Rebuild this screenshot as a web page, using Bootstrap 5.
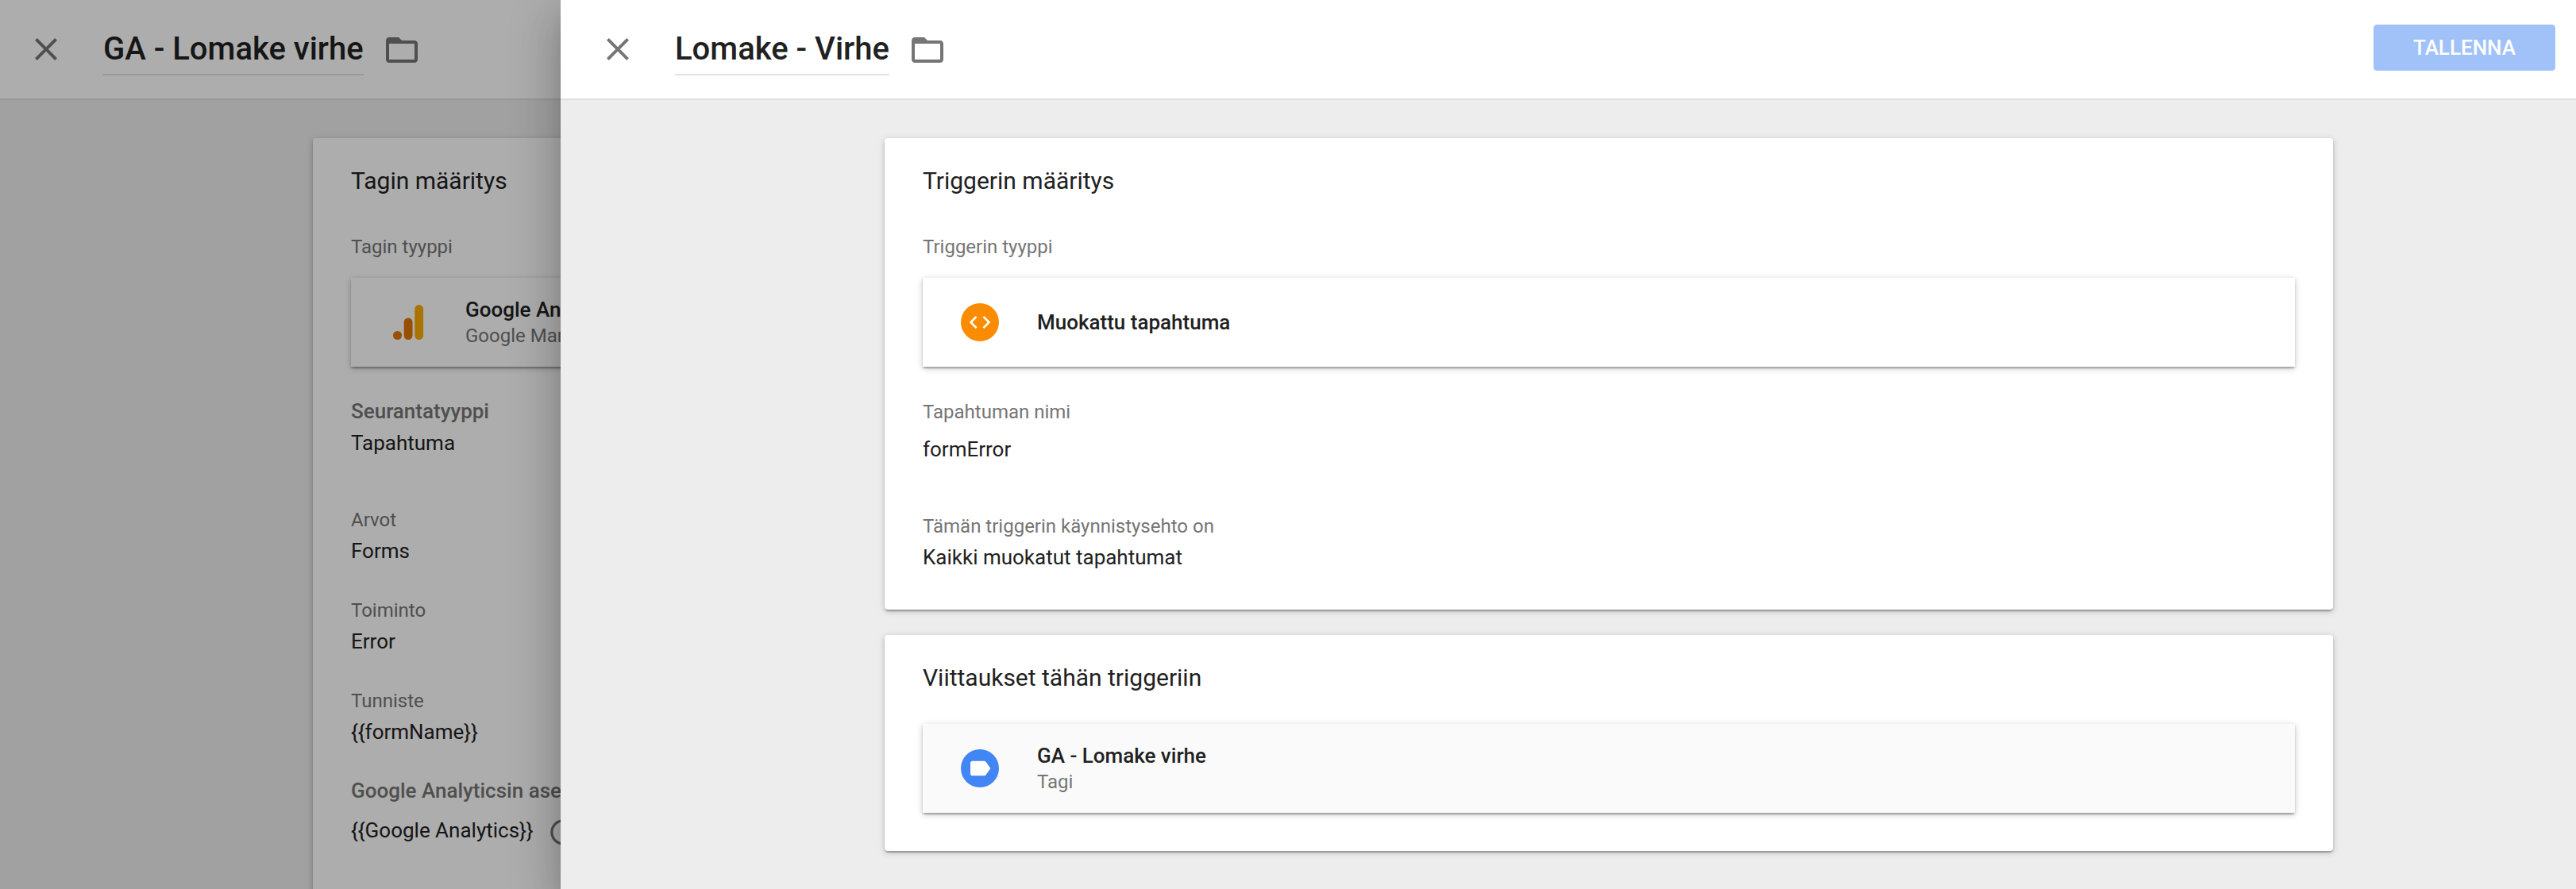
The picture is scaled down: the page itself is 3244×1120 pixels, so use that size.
<!DOCTYPE html>
<html lang="fi">
<head>
<meta charset="utf-8">
<title>Lomake - Virhe</title>
<link href="https://cdn.jsdelivr.net/npm/bootstrap@5.3.0/dist/css/bootstrap.min.css" rel="stylesheet">
<style>
  html, body { height: 100%; }
  body { font-family: Roboto, sans-serif; font-size: 26px; line-height: 32px; color: #212121; background: #ededed; }
  .stage { height: 1120px; }
  .sheet { background: #ededed; }
  .sheet-front { left: 706px; box-shadow: 0 16px 20px -10px rgba(0,0,0,.2), 0 32px 48px 4px rgba(0,0,0,.14), 0 12px 60px 10px rgba(0,0,0,.12); }
  .scrim { background: rgba(0,0,0,.32); }
  .topbar { height: 126px; border-bottom: 2px solid #e0e0e0; padding: 0 26px 0 34px; }
  .sheet-front .topbar { padding-left: 48px; }
  .topbar svg { width: 48px; height: 48px; fill: #757575; flex: none; }
  .icon-close { margin-top: 38px; }
  .icon-folder { margin-top: 39px; }
  .sheet-title { font-size: 40px; font-weight: 500; line-height: 48px; height: 57px; margin: 38px 24px 0 48px; border-bottom: 2px solid #e0e0e0; white-space: nowrap; }
  .btn-save { --bs-btn-disabled-bg: #a0c2f9; --bs-btn-disabled-border-color: #a0c2f9; --bs-btn-disabled-color: #fff; --bs-btn-disabled-opacity: 1; width: 229px; height: 58px; margin-top: 31px; border-radius: 4px; font-size: 26px; line-height: 32px; font-weight: 500; padding: 0; }
  .panel { width: 1824px; padding: 34px 48px 48px; border-radius: 4px; background: #fff; }
  .panel, .tile { box-shadow: 0 2px 8px rgba(0,0,0,.22), 0 2px 2px rgba(0,0,0,.18), 0 4px 2px -2px rgba(0,0,0,.12); }
  .back-body { padding: 48px 0 0 394px; }
  .back-body .panel { padding-bottom: 120px; }
  .front-body { padding: 48px 0 0 408px; gap: 32px; }
  .panel-trigger { padding-bottom: 50px; }
  .panel-title { font-size: 30px; line-height: 40px; font-weight: 400; margin: 0; }
  .caption { font-size: 24px; color: #757575; }
  .caption-strong { font-weight: 500; color: #757575; }
  .first-caption { margin: 47px 0 23px; }
  .tile { height: 112px; padding: 0 48px; gap: 48px; background: #fff; }
  .tile svg { width: 48px; height: 48px; flex: none; }
  .tile .caption { padding-top: 1px; margin-bottom: -1px; }
  .tile-name { font-weight: 500; }
  .tile-ref { margin-top: 38px; background: #fafafa; }
  .field { white-space: nowrap; margin-top: 43px; }
  .field > :last-child { margin-top: 7px; }
  .field.field-type { margin-top: 40px; }
  .field.field-type > :last-child { margin-top: 8px; }
  .field.field-far { margin-top: 65px; }
  .field.field-settings { margin-top: 42px; }
  .field.field-settings > :last-child { margin-top: 18px; height: 32px; }
  .field.field-event { margin-top: 41px; }
  .field.field-event > :last-child { margin-top: 15px; }
  .icon-info { width: 39px; height: 39px; fill: #757575; margin: 4px 0 0 18px; }
</style>
<script src="https://cdn.jsdelivr.net/npm/bootstrap@5.3.0/dist/js/bootstrap.bundle.min.js"></script>
</head>
<body>
<svg class="d-none">
  <symbol id="close" viewBox="0 0 24 24"><path d="M19 6.410 17.590 5 12 10.590 6.410 5 5 6.410 10.590 12 5 17.590 6.410 19 12 13.410 17.590 19 19 17.590 13.410 12z"/></symbol>
  <symbol id="folder" viewBox="0 0 24 24"><path d="M20 6h-8l-2-2H4c-1.100 0-1.990.9-1.990 2L2 18c0 1.100.9 2 2 2h16c1.100 0 2-.9 2-2V8c0-1.100-.9-2-2-2zm0 12H4V8h16v10z"/></symbol>
</svg>
<div class="stage position-relative overflow-hidden">
  <section class="sheet h-100 overflow-hidden">
    <header class="topbar bg-white d-flex align-items-start">
      <svg class="icon-close"><use href="#close"/></svg>
      <h1 class="sheet-title">GA - Lomake virhe</h1>
      <svg class="icon-folder"><use href="#folder"/></svg>
    </header>
    <div class="back-body">
      <div class="panel">
        <h2 class="panel-title">Tagin määritys</h2>
        <div class="caption first-caption">Tagin tyyppi</div>
        <div class="tile d-flex align-items-center">
          <svg viewBox="0 0 48 48"><circle cx="10.500" cy="40.500" r="5.500" fill="#e37400"/><rect x="18.700" y="18.500" width="10.800" height="27.500" rx="5.400" fill="#e37400"/><rect x="32.300" y="2" width="10.800" height="44" rx="5.400" fill="#f9ab00"/></svg>
          <div class="text-nowrap">
            <div class="tile-name">Google Analytics: Universal Analytics</div>
            <div class="caption">Google Marketing Platform</div>
          </div>
        </div>
        <div class="field field-type"><div class="caption-strong">Seurantatyyppi</div><div>Tapahtuma</div></div>
        <div class="field field-far"><div class="caption">Arvot</div><div>Forms</div></div>
        <div class="field"><div class="caption">Toiminto</div><div>Error</div></div>
        <div class="field"><div class="caption">Tunniste</div><div>{{formName}}</div></div>
        <div class="field field-settings"><div class="caption-strong">Google Analyticsin asetusmuuttuja</div>
          <div class="d-flex align-items-center"><span>{{Google Analytics}}</span>
            <svg class="icon-info" viewBox="0 0 24 24"><path d="M11 17h2v-6h-2v6zm1-15C6.480 2 2 6.480 2 12s4.480 10 10 10 10-4.480 10-10S17.520 2 12 2zm0 18c-4.410 0-8-3.590-8-8s3.590-8 8-8 8 3.590 8 8-3.590 8-8 8zM11 9h2V7h-2v2z"/></svg>
          </div>
        </div>
      </div>
    </div>
  </section>
  <div class="scrim position-absolute top-0 start-0 w-100 h-100"></div>
  <section class="sheet sheet-front position-absolute top-0 bottom-0 end-0">
    <header class="topbar bg-white d-flex align-items-start">
      <svg class="icon-close"><use href="#close"/></svg>
      <h1 class="sheet-title">Lomake - Virhe</h1>
      <svg class="icon-folder"><use href="#folder"/></svg>
      <button class="btn btn-primary btn-save ms-auto text-uppercase" disabled>Tallenna</button>
    </header>
    <main class="front-body d-flex flex-column align-items-start">
      <div class="panel panel-trigger">
        <h2 class="panel-title">Triggerin määritys</h2>
        <div class="caption first-caption">Triggerin tyyppi</div>
        <div class="tile d-flex align-items-center">
          <svg viewBox="0 0 48 48"><circle cx="24" cy="24" r="24" fill="#fb8c00"/><path transform="translate(8 8) scale(1.3333)" fill="#fff" d="M9.400 16.600 4.800 12l4.600-4.600L8 6l-6 6 6 6 1.400-1.400zm5.200 0 4.600-4.600-4.600-4.600L16 6l6 6-6 6-1.400-1.400z"/></svg>
          <div class="tile-name">Muokattu tapahtuma</div>
        </div>
        <div class="field field-event"><div class="caption">Tapahtuman nimi</div><div>formError</div></div>
        <div class="field field-far"><div class="caption">Tämän triggerin käynnistysehto on</div><div>Kaikki muokatut tapahtumat</div></div>
      </div>
      <div class="panel">
        <h2 class="panel-title">Viittaukset tähän triggeriin</h2>
        <div class="tile tile-ref d-flex align-items-center">
          <svg viewBox="0 0 48 48"><circle cx="24" cy="24" r="24" fill="#4285f4"/><path transform="translate(8 8) scale(1.3333)" fill="#fff" d="M17.630 5.840C17.270 5.330 16.670 5 16 5L5 5.010C3.900 5.010 3 5.900 3 7v10c0 1.100.9 1.990 2 1.990L16 19c.67 0 1.270-.33 1.630-.84L22 12l-4.370-6.160z"/></svg>
          <div>
            <div class="tile-name">GA - Lomake virhe</div>
            <div class="caption">Tagi</div>
          </div>
        </div>
      </div>
    </main>
  </section>
</div>
</body>
</html>
